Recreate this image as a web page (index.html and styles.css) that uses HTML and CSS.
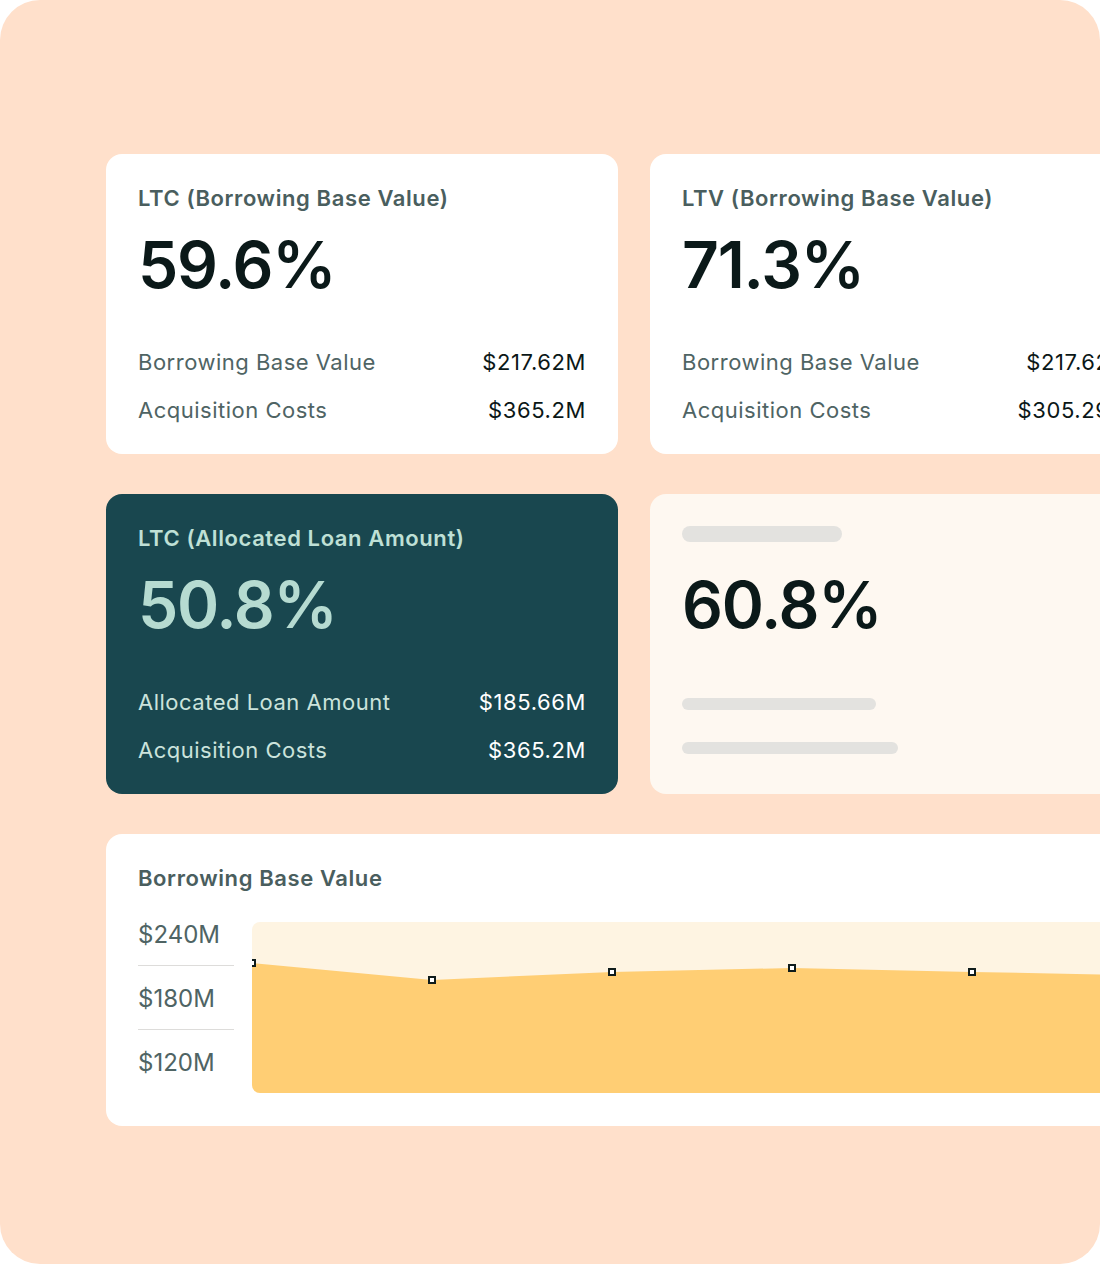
FILE: index.html
```html
<!DOCTYPE html>
<html lang="en">
<head>
  <meta charset="UTF-8">
  <meta name="viewport" content="width=device-width, initial-scale=1.0">
  <title>Borrowing Base Metrics</title>
  <link rel="stylesheet" href="styles.css">
</head>
<body>
  <div class="frame">
    <div class="grid">
      <div class="card">
        <h4 class="card-title">LTC (Borrowing Base Value)</h4>
        <p class="big">59.6%</p>
        <div class="rows">
          <div class="row"><span class="label">Borrowing Base Value</span><span class="value">$217.62M</span></div>
          <div class="row"><span class="label">Acquisition Costs</span><span class="value">$365.2M</span></div>
        </div>
      </div>

      <div class="card">
        <h4 class="card-title">LTV (Borrowing Base Value)</h4>
        <p class="big">71.3%</p>
        <div class="rows">
          <div class="row"><span class="label">Borrowing Base Value</span><span class="value">$217.62M</span></div>
          <div class="row"><span class="label">Acquisition Costs</span><span class="value">$305.29M</span></div>
        </div>
      </div>

      <div class="card card-dark">
        <h4 class="card-title">LTC (Allocated Loan Amount)</h4>
        <p class="big">50.8%</p>
        <div class="rows">
          <div class="row"><span class="label">Allocated Loan Amount</span><span class="value">$185.66M</span></div>
          <div class="row"><span class="label">Acquisition Costs</span><span class="value">$365.2M</span></div>
        </div>
      </div>

      <!-- loading state -->
      <div class="card card-skeleton">
        <div class="bar bar-title"></div>
        <p class="big">60.8%</p>
        <div class="rows">
          <div class="bar bar-one"></div>
          <div class="bar bar-two"></div>
        </div>
      </div>

      <div class="card chart-card">
        <h4 class="card-title">Borrowing Base Value</h4>
        <div class="chart-row">
          <div class="axis">
            <div class="tick">$240M</div>
            <div class="tick">$180M</div>
            <div class="tick">$120M</div>
          </div>
          <div class="plot">
            <svg width="878" height="171" viewBox="0 0 878 171">
              <polygon class="area" points="0,41 180,58 360,50 540,46 720,50 878,53 878,171 0,171"/>
              <rect class="dot" x="-3" y="38" width="6" height="6"/>
              <rect class="dot" x="177" y="55" width="6" height="6"/>
              <rect class="dot" x="357" y="47" width="6" height="6"/>
              <rect class="dot" x="537" y="43" width="6" height="6"/>
              <rect class="dot" x="717" y="47" width="6" height="6"/>
            </svg>
          </div>
        </div>
      </div>
    </div>
  </div>
</body>
</html>
```

FILE: styles.css
```css
html, body {
  margin: 0;
  background: #fff;
}
body {
  font-family: Inter, "Liberation Sans", sans-serif;
}
.frame {
  width: 1100px;
  height: 1264px;
  box-sizing: border-box;
  padding: 154px 0 0 106px;
  background: #ffe0cb;
  border-radius: 40px;
  overflow: hidden;
}
.grid {
  display: grid;
  grid-template-columns: 512px 512px;
  column-gap: 32px;
  row-gap: 40px;
}
h4, p {
  margin: 0;
}

/* cards */
.card {
  height: 300px;
  box-sizing: border-box;
  padding: 30px 32px 30px;
  background: #fff;
  border-radius: 16px;
  display: flex;
  flex-direction: column;
}
.card-title {
  font-size: 22px;
  line-height: 28px;
  font-weight: 600;
  color: #4a5e5e;
  letter-spacing: 0.6px;
  white-space: nowrap;
}
.big {
  margin-top: 21px;
  font-size: 64px;
  line-height: 64px;
  font-weight: 600;
  color: #0b1919;
  letter-spacing: -1.2px;
}
.rows {
  margin-top: auto;
  display: flex;
  flex-direction: column;
  gap: 20px;
}
.row {
  display: flex;
  justify-content: space-between;
  font-size: 22px;
  line-height: 28px;
  white-space: nowrap;
}
.label {
  color: #4f6464;
  letter-spacing: 0.5px;
}
.value {
  color: #0b1717;
  letter-spacing: 0.6px;
}

/* dark card */
.card-dark {
  background: #19474f;
}
.card-dark .card-title {
  color: #bfe0d6;
}
.card-dark .big {
  color: #b6dbd1;
}
.card-dark .label {
  color: #cbe3dc;
}
.card-dark .value {
  color: #fff;
}

/* skeleton card */
.card-skeleton {
  background: #fef8f1;
  padding-top: 28px;
}
.card-skeleton .big {
  margin-top: 23px;
}
.bar {
  background: #e3e2df;
  border-radius: 8px;
}
.bar-title {
  width: 160px;
  height: 16px;
  margin: 4px 0 8px;
}
.card-skeleton .rows {
  gap: 0;
}
.bar-one {
  width: 194px;
  height: 12px;
}
.bar-two {
  width: 216px;
  height: 12px;
  margin-top: 32px;
  margin-bottom: 10px;
}

/* chart */
.chart-card {
  grid-column: 1 / 3;
  height: 292px;
  padding-bottom: 33px;
}
.chart-row {
  margin-top: 9px;
  display: flex;
  align-items: flex-end;
  gap: 18px;
}
.axis {
  width: 96px;
  display: flex;
  flex-direction: column;
}
.tick {
  height: 64px;
  box-sizing: border-box;
  padding-bottom: 15px;
  display: flex;
  align-items: flex-end;
  font-size: 24px;
  line-height: 30px;
  color: #4f6464;
  border-bottom: 1px solid #dddcda;
}
.tick:first-child {
  height: 65px;
}
.tick:last-child {
  border-bottom: none;
  height: 63px;
}
.plot {
  width: 878px;
  height: 171px;
  background: #fef4e2;
  border-radius: 8px;
  overflow: hidden;
}
.plot svg {
  display: block;
}
.area {
  fill: #ffce74;
}
.dot {
  fill: #fff;
  stroke: #0f1c1c;
  stroke-width: 2;
}
```
